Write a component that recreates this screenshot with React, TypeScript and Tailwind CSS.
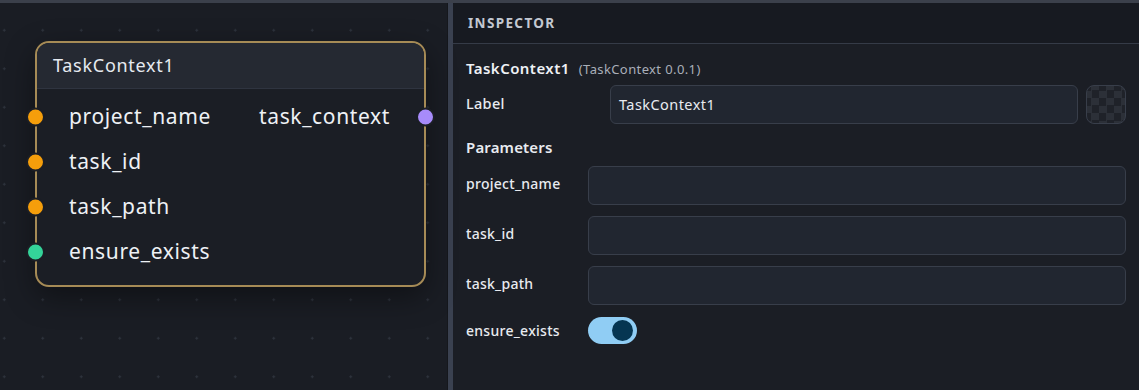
import React from "react";

type Port = { name: string; color: string };

const inputs: Port[] = [
  { name: "project_name", color: "bg-[#f59e0b]" },
  { name: "task_id", color: "bg-[#f59e0b]" },
  { name: "task_path", color: "bg-[#f59e0b]" },
  { name: "ensure_exists", color: "bg-[#34d399]" },
];

const Handle: React.FC<{ color: string; side: "left" | "right" }> = ({ color, side }) => (
  <span
    className={
      "absolute top-1/2 -translate-y-1/2 w-[19px] h-[19px] rounded-full border-2 border-[#1b1e25] " +
      color +
      (side === "left" ? " -left-[11px]" : " -right-[11px]")
    }
  />
);

const TaskNode: React.FC = () => {
  return (
    <div className="absolute left-[35px] top-[38px] w-[391px] h-[246px] rounded-[14px] border-2 border-[#a68b56] bg-[#1b1e25] shadow-[0_10px_30px_rgba(0,0,0,0.4)]">
      <div className="h-[46px] flex items-center px-[16px] bg-[#252932] rounded-t-[12px] border-b border-[#2f3440]">
        <span className="text-[18px] tracking-[0.04em] text-[#e6eaf0]">TaskContext1</span>
      </div>
      <div className="flex flex-col pt-[5px]">
        {inputs.map((p, i) => (
          <div key={p.name} className="relative h-[45px] flex items-center justify-between pl-[32px] pr-[34px]">
            <Handle color={p.color} side="left" />
            <span className="text-[21px] tracking-[0.03em] text-[#eef1f5]">{p.name}</span>
            {i === 0 && (
              <>
                <span className="text-[21px] tracking-[0.03em] text-[#eef1f5]">task_context</span>
                <Handle color="bg-[#a78bfa]" side="right" />
              </>
            )}
          </div>
        ))}
      </div>
    </div>
  );
};

const Field: React.FC<{ value?: string; className?: string }> = ({ value, className }) => (
  <div
    className={
      "h-[39px] rounded-[6px] border border-[#383e4a] bg-[#212630] flex items-center px-[8px] text-[14.5px] tracking-[0.03em] text-[#e8ebf0] " +
      (className ?? "")
    }
  >
    {value}
  </div>
);

const params = ["project_name", "task_id", "task_path"];

export default function App() {
  return (
    <div
      className="w-[1139px] h-[390px] flex flex-col bg-[#1a1d24] overflow-hidden"
      style={{ fontFamily: '"Noto Sans", "Open Sans", sans-serif' }}
    >
      <div className="h-[3px] bg-[#3b404b] shrink-0" />
      <div className="flex flex-1 min-h-0">
        {/* canvas */}
        <div className="relative w-[447px] bg-[#1a1d24] bg-[radial-gradient(circle,#2e333d_1px,transparent_1.2px)] bg-[size:38.5px_38.5px] bg-[position:-15px_8px]">
          <TaskNode />
        </div>
        <div className="w-[1px] bg-[#15171c]" />
        <div className="w-[5px] bg-[#3a4150]" />

        {/* inspector */}
        <div className="flex-1 flex flex-col bg-[#1b1e25]">
          <div className="h-[41px] shrink-0 flex items-center px-[15px] bg-[#171a21] border-b border-[#353b47]">
            <span className="text-[13.5px] font-bold tracking-[0.1em] text-[#c3c8d1]">INSPECTOR</span>
          </div>
          <div className="flex flex-col px-[13px] pt-[13px]">
            <div className="flex items-baseline gap-[9px] h-[22px]">
              <span className="text-[15px] font-semibold tracking-[0.03em] text-[#eef1f5]">TaskContext1</span>
              <span className="text-[13px] tracking-[0.03em] text-[#a9afb9]">(TaskContext 0.0.1)</span>
            </div>
            <div className="flex items-center mt-[6px] h-[39px]">
              <span className="w-[144px] text-[14.5px] font-medium tracking-[0.02em] text-[#e8ebf0] -mt-[2px]">Label</span>
              <Field value="TaskContext1" className="flex-1" />
              <div className="ml-[8px] w-[40px] h-[39px] rounded-[8px] border border-[#383e4a] bg-[#1f2229] bg-[conic-gradient(#2c3038_25%,#1f2229_0_50%,#2c3038_0_75%,#1f2229_0)] bg-[size:15px_15px] bg-[position:-3px_-3px]" />
            </div>
            <div className="mt-[10px] h-[26px] flex items-center text-[15px] font-semibold tracking-[0.01em] text-[#e8ebf0]">
              Parameters
            </div>
            <div className="flex flex-col gap-[11px] mt-[6px]">
              {params.map((p) => (
                <div key={p} className="flex items-center">
                  <span className="w-[122px] text-[14px] font-medium tracking-[0.02em] text-[#e8ebf0] -mt-[4px]">{p}</span>
                  <Field className="flex-1" />
                </div>
              ))}
              <div className="flex items-center h-[28px]">
                <span className="w-[122px] text-[14px] font-medium tracking-[0.02em] text-[#e8ebf0]">ensure_exists</span>
                <div className="w-[49px] h-[27px] rounded-full bg-[#90cdf4] flex items-center justify-end pr-[4px]">
                  <span className="w-[21px] h-[21px] rounded-full bg-[#063652]" />
                </div>
              </div>
            </div>
          </div>
        </div>
      </div>
    </div>
  );
}
